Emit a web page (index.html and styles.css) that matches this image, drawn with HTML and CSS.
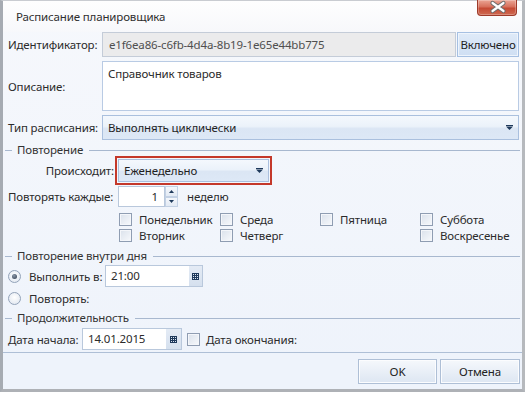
FILE: index.html
```html
<!DOCTYPE html>
<html lang="ru">
<head>
<meta charset="utf-8">
<link rel="stylesheet" href="styles.css">
</head>
<body>
<div class="window">
  <div class="titlebar">
    <span class="title">Расписание планировщика</span>
    <div class="close">
      <svg width="40" height="16" viewBox="0 0 40 16">
        <path d="M14.5 4 L25.5 12 M25.5 4 L14.5 12" stroke="#6d6d6d" stroke-width="4.2" stroke-linecap="round"/>
        <path d="M14.5 4 L25.5 12 M25.5 4 L14.5 12" stroke="#ffffff" stroke-width="2.2" stroke-linecap="round"/>
      </svg>
    </div>
  </div>

  <div class="body">
    <div class="form-grid">
      <span class="lbl">Идентификатор:</span>
      <div class="id-field">
        <div class="edit disabled">e1f6ea86-c6fb-4d4a-8b19-1e65e44bb775</div>
        <div class="toggle">Включено</div>
      </div>
      <span class="lbl">Описание:</span>
      <div class="memo">Справочник товаров</div>
      <span class="lbl">Тип расписания:</span>
      <div class="combo">
        <span class="combo-text">Выполнять циклически</span>
        <svg class="arrow" width="7" height="5" viewBox="0 0 7 5"><rect x="0" y="0" width="7" height="1" fill="#1e395b"/><path d="M0 1.5 H7 L3.5 5 Z" fill="#1e395b"/></svg>
      </div>
    </div>

    <div class="group-head"><span class="group-title">Повторение</span></div>

    <div class="occurs-row">
      <span class="occurs-lbl">Происходит:</span>
      <div class="focus-ring">
        <div class="combo small">
          <span class="combo-text">Еженедельно</span>
          <svg class="arrow" width="7" height="5" viewBox="0 0 7 5"><rect x="0" y="0" width="7" height="1" fill="#1e395b"/><path d="M0 1.5 H7 L3.5 5 Z" fill="#1e395b"/></svg>
        </div>
      </div>
    </div>

    <div class="every-row">
      <span class="every-lbl">Повторять каждые:</span>
      <div class="spin">
        <div class="spin-value">1</div>
        <div class="spin-btns">
          <div class="spin-btn"><svg width="5" height="3" viewBox="0 0 5 3"><path d="M0 3 H5 L2.5 0 Z" fill="#1e395b"/></svg></div>
          <div class="spin-btn"><svg width="5" height="3" viewBox="0 0 5 3"><path d="M0 0 H5 L2.5 3 Z" fill="#1e395b"/></svg></div>
        </div>
      </div>
      <span class="unit">неделю</span>
    </div>

    <div class="days">
      <div class="day"><span class="check"></span>Понедельник</div>
      <div class="day"><span class="check"></span>Среда</div>
      <div class="day"><span class="check"></span>Пятница</div>
      <div class="day"><span class="check"></span>Суббота</div>
      <div class="day"><span class="check"></span>Вторник</div>
      <div class="day"><span class="check"></span>Четверг</div>
      <div class="day"></div>
      <div class="day"><span class="check"></span>Воскресенье</div>
    </div>

    <div class="group-head gh2"><span class="group-title">Повторение внутри дня</span></div>

    <div class="radio-row">
      <span class="radio checked"></span>
      <span class="radio-lbl">Выполнить в:</span>
      <div class="edit-btn time">
        <div class="edit-value">21:00</div>
        <div class="edit-button"><svg width="7" height="7" viewBox="0 0 7 7"><path d="M0 0h7v7h-7z M1 1v1h1v-1z M3 1v1h1v-1z M5 1v1h1v-1z M1 3v1h1v-1z M3 3v1h1v-1z M5 3v1h1v-1z M1 5v1h1v-1z M3 5v1h1v-1z M5 5v1h1v-1z" fill="#1e395b" fill-rule="evenodd"/></svg></div>
      </div>
    </div>
    <div class="radio-row second">
      <span class="radio"></span>
      <span class="radio-lbl">Повторять:</span>
    </div>

    <div class="group-head gh3"><span class="group-title">Продолжительность</span></div>

    <div class="date-row">
      <span class="date-lbl">Дата начала:</span>
      <div class="edit-btn date">
        <div class="edit-value">14.01.2015</div>
        <div class="edit-button wide"><svg width="7" height="7" viewBox="0 0 7 7"><path d="M0 0h7v7h-7z M1 1v1h1v-1z M3 1v1h1v-1z M5 1v1h1v-1z M1 3v1h1v-1z M3 3v1h1v-1z M5 3v1h1v-1z M1 5v1h1v-1z M3 5v1h1v-1z M5 5v1h1v-1z" fill="#1e395b" fill-rule="evenodd"/></svg></div>
      </div>
      <span class="check end-check"></span>
      <span class="end-lbl">Дата окончания:</span>
    </div>
  </div>

  <div class="footer">
    <div class="btn ok">OK</div>
    <div class="btn cancel">Отмена</div>
  </div>
</div>
</body>
</html>
```

FILE: styles.css
```css
* { box-sizing: border-box; }

body {
  margin: 0;
  background: #ffffff;
  font-family: "Noto Sans", "Open Sans", sans-serif;
  font-size: 11.5px;
  letter-spacing: -0.15px;
  color: #2b2b2b;
}

.window {
  width: 525px;
  height: 392px;
  border-top: 1px solid #c9ccd1;
  border-left: 3px solid #a6abb2;
  border-right: 3px solid #b6b9bd;
  border-bottom: 3px solid #aeb1b6;
  display: flex;
  flex-direction: column;
  background: linear-gradient(#f6f8fc, #eef3fb);
}

.titlebar {
  height: 31px;
  display: flex;
  align-items: flex-start;
  padding-left: 13px;
  background: linear-gradient(#fefefe, #f7f8fb);
}

.title {
  margin-top: 7px;
  line-height: 18px;
  color: #2e2e2e;
}

.close {
  margin-left: auto;
  margin-right: 5px;
  margin-top: -1px;
  width: 40px;
  height: 16px;
  border: 1px solid #9d3a2a;
  border-top: none;
  border-radius: 0 0 4px 4px;
  background: linear-gradient(#eba594 0%, #d7705c 45%, #c54a34 55%, #cf6a52 100%);
  box-shadow: inset 0 0 0 1px rgba(255, 255, 255, 0.25);
}

.close svg { display: block; margin-top: -1px; }

.body {
  flex: 1;
  padding: 0 3px 0 5px;
}

.form-grid {
  display: grid;
  grid-template-columns: 94px 1fr;
  grid-template-rows: 25px 50px 25px;
  row-gap: 4px;
}

.lbl { align-self: center; white-space: nowrap; }

.id-field { display: flex; }

.edit {
  border: 1px solid #b9c8dc;
  background: #fff;
  line-height: 23px;
  padding-left: 6px;
}

.edit.disabled {
  flex: 1;
  background: #ebebec;
  border-color: #c4ccd8;
  color: #4f4f4f;
}

.toggle {
  width: 62px;
  margin-left: 1px;
  border: 1px solid #a6c0e2;
  background: linear-gradient(#dfeaf8, #cfdff3);
  box-shadow: inset 0 0 0 1px #eef4fc;
  text-align: center;
  line-height: 23px;
  color: #222;
}

.memo {
  border: 1px solid #b9cbe4;
  background: #fff;
  padding: 3px 0 0 5px;
  line-height: 18px;
}

.combo {
  display: flex;
  align-items: center;
  border: 1px solid #aac0de;
  background: linear-gradient(#f4f8fd 0%, #ebf2fa 45%, #dbe6f4 55%, #dde8f6 100%);
  padding: 0 5px 0 5px;
}

.combo-text { flex: 1; color: #1f1f1f; }

.arrow { display: block; }

.group-head {
  display: flex;
  align-items: flex-start;
  height: 14px;
  margin-top: 3px;
  margin-left: -3px;
  margin-right: -1px;
}

.group-head::before {
  content: "";
  width: 7px;
  height: 1px;
  margin-top: 7px;
  background: #a8b8cf;
}

.group-head::after {
  content: "";
  flex: 1;
  height: 1px;
  margin-top: 7px;
  background: #a8b8cf;
}

.group-title {
  line-height: 14px;
  padding: 0 6px 0 5px;
  color: #333;
}

.occurs-row {
  display: flex;
  align-items: center;
  margin-top: -1px;
}

.occurs-lbl {
  width: 107px;
  text-align: right;
  padding-right: 1px;
}

.focus-ring {
  border: 2px solid #c4382a;
  padding: 1px;
}

.combo.small {
  width: 151px;
  height: 23px;
}

.every-row {
  display: flex;
  align-items: center;
  margin-top: 1px;
  height: 21px;
}

.every-lbl { width: 110px; white-space: nowrap; }

.spin { display: flex; height: 21px; }

.spin-value {
  width: 47px;
  border: 1px solid #b9c8dc;
  background: #fff;
  text-align: right;
  padding-right: 6px;
  line-height: 19px;
}

.spin-btns {
  width: 13px;
  display: flex;
  flex-direction: column;
}

.spin-btn {
  flex: 1;
  display: flex;
  align-items: center;
  justify-content: center;
  border: 1px solid #c3d1e4;
  background: linear-gradient(#f4f7fb, #e3eaf4);
}

.spin-btn svg { display: block; }

.unit { margin-left: 9px; }

.days {
  display: grid;
  grid-template-columns: 101px 100px 100px auto;
  grid-auto-rows: 16px;
  margin-top: 4px;
  margin-left: 111px;
}

.day {
  display: flex;
  align-items: center;
  white-space: nowrap;
}

.check {
  width: 13px;
  height: 13px;
  border: 1px solid #8f9db2;
  background: linear-gradient(135deg, #dae1eb, #f7f9fc);
  box-shadow: inset 0 0 0 1px #f4f6fa;
  margin-right: 7px;
  flex: none;
}

.gh2 { margin-top: 6px; }

.radio-row {
  display: flex;
  align-items: center;
  height: 22px;
  margin-top: 2px;
}

.radio-row.second { height: 18px; }

.radio {
  width: 13px;
  height: 13px;
  border-radius: 50%;
  border: 1px solid #93a3b9;
  background: radial-gradient(circle at 50% 40%, #ffffff, #dde4ee);
  display: flex;
  align-items: center;
  justify-content: center;
  flex: none;
}

.radio.checked::after {
  content: "";
  width: 5px;
  height: 5px;
  border-radius: 50%;
  background: radial-gradient(circle at 40% 35%, #8a97a8, #2f3b4b);
}

.radio-lbl {
  margin-left: 8px;
  width: 76px;
  white-space: nowrap;
}

.edit-btn {
  display: flex;
  height: 22px;
  border: 1px solid #b9c8dc;
  background: #fff;
}

.edit-value {
  flex: 1;
  padding-left: 5px;
  line-height: 20px;
}

.edit-button {
  width: 13px;
  display: flex;
  align-items: center;
  justify-content: center;
  background: linear-gradient(#e4ebf5, #d5e0ee);
}

.edit-button.wide { width: 15px; }

.edit-button svg { display: block; }

.edit-btn.time { width: 98px; }

.edit-btn.date { width: 100px; }

.gh3 { margin-top: 4px; }

.date-row {
  display: flex;
  align-items: center;
  margin-top: 3px;
  height: 22px;
}

.date-lbl { width: 74px; white-space: nowrap; }

.end-check { margin-left: 5px; margin-right: 6px; }

.footer {
  height: 37px;
  border-top: 1px solid #aebfd6;
  background: #eef3fb;
  display: flex;
  justify-content: flex-end;
  align-items: flex-start;
  gap: 3px;
  padding: 6px 2px 0 0;
}

.btn {
  height: 25px;
  border: 1px solid #aebfd6;
  background: linear-gradient(#f5f8fc 0%, #e9eff7 50%, #dde6f2 100%);
  box-shadow: inset 0 0 0 1px #fbfcfe;
  text-align: center;
  line-height: 23px;
  color: #222;
}

.btn.ok { width: 79px; }

.btn.cancel { width: 80px; }
```
